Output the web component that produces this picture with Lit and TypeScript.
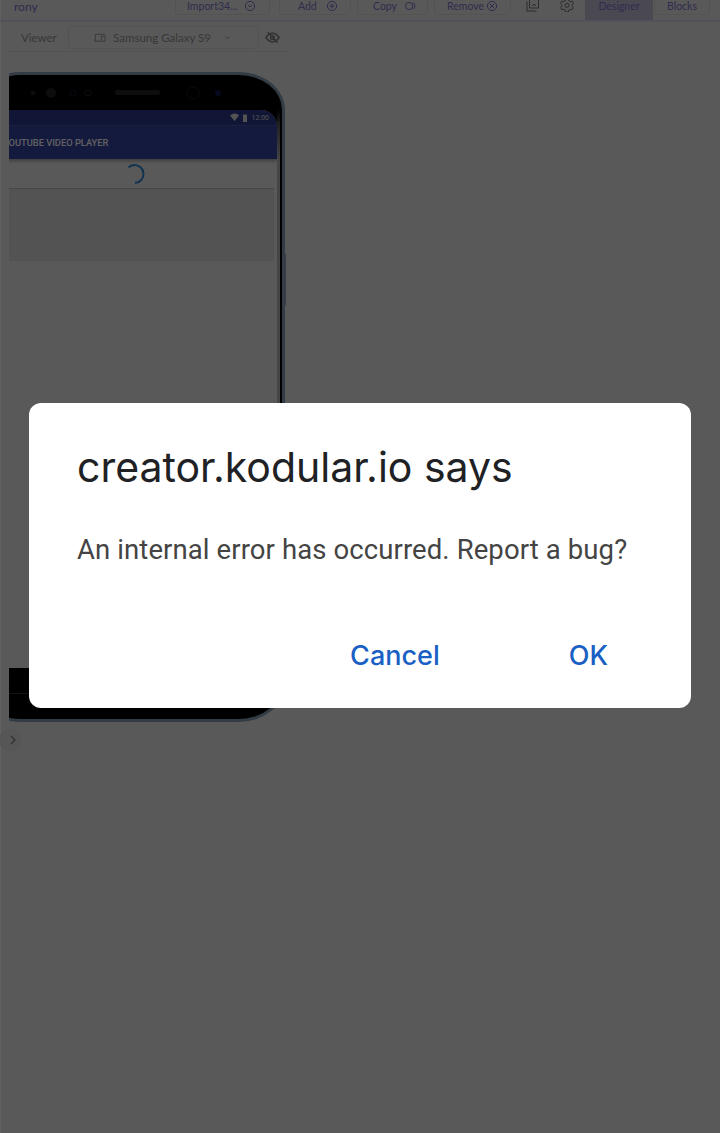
import { LitElement, html, css, svg } from "lit";
import { customElement } from "lit/decorators.js";

const circleIcon = (inner: unknown) => html`<svg class="ico" viewBox="0 0 12 12" fill="none" stroke="currentColor" stroke-width="1"><circle cx="6" cy="6" r="4.6"></circle>${inner}</svg>`;

@customElement("app-root")
export class AppRoot extends LitElement {
  static styles = css`
    :host { display: block; position: relative; width: 720px; height: 1133px; overflow: hidden; background: #dedede; font-family: "Lato", "Liberation Sans", sans-serif; }
    .page { height: 100%; display: flex; flex-direction: column; border-left: 1px solid #f2f2f2; box-sizing: border-box; }
    .topbar { height: 20px; flex: none; display: flex; align-items: flex-end; overflow: hidden; border-bottom: 2px solid #cfcbe0; color: #7a6fc0; font-size: 10.5px; padding-left: 14px; margin-left: -1px; }
    .user { width: 160px; font-size: 12px; padding-bottom: 7px; line-height: 13px; flex: none; }
    .btn { height: 30px; box-sizing: border-box; border: 1px solid #d0d0d0; border-radius: 4px; margin-bottom: 5px; display: flex; align-items: flex-end; padding-bottom: 2px; line-height: 12px; flex: none; }
    .ico { width: 12px; height: 12px; flex: none; }
    .import { width: 95px; margin-left: 1px; padding-left: 11px; gap: 6px; }
    .add { width: 72px; margin-left: 9px; padding-left: 18px; gap: 9px; }
    .copy { width: 71px; margin-left: 6px; padding-left: 15px; gap: 7px; }
    .remove { width: 77px; margin-left: 6px; padding-left: 12px; gap: 2px; }
    .plain { display: flex; width: 34px; justify-content: center; margin-bottom: 8px; color: #6c6c6c; flex: none; }
    .plain svg { width: 14px; height: 14px; }
    .first { margin-left: 5px; }
    .tab { height: 20px; display: flex; align-items: flex-end; justify-content: center; padding-bottom: 8px; box-sizing: border-box; line-height: 11px; flex: none; }
    .designer { width: 68px; background: #b9b6ce; margin-left: 1px; }
    .blocks { width: 56px; height: 30px; border: 1px solid #d0d0d0; border-radius: 4px; margin: 0 0 5px 1px; padding-bottom: 2px; }
    .panel { width: 279px; margin-left: 8px; flex: 1; min-height: 0; display: flex; flex-direction: column; }
    .viewer { flex: none; height: 28px; margin-top: 1px; border-bottom: 1px solid #d0d0d0; display: flex; align-items: center; color: #8c8c8c; font-size: 11.5px; }
    .vlabel { width: 59px; padding-left: 12px; box-sizing: border-box; }
    .select { width: 191px; height: 23px; box-sizing: border-box; border: 1px solid #d0d0d0; border-radius: 4px; display: flex; align-items: center; justify-content: center; gap: 7px; }
    .select svg { width: 13px; height: 13px; }
    .chev { margin-left: 3px; }
    .eye { width: 15px; height: 15px; margin-left: 6px; color: #7c7c7c; }
    .stage { position: relative; flex: none; height: 670px; padding-top: 20px; box-sizing: border-box; overflow: hidden; width: 300px; }
    .phone { width: 310px; height: 650px; margin-left: -34px; box-sizing: border-box; background: #000; border: 3px solid #7f93ad; border-left: 0; border-radius: 46px / 38px; position: relative; overflow: hidden; display: flex; flex-direction: column; }
    .bezel { height: 33px; flex: none; }
    .screen { flex: none; height: 558px; margin: 2px 5px 0 0; background: #dedede; border-radius: 0 16px 0 0; overflow: hidden; display: flex; flex-direction: column; }
    .edge { position: absolute; right: 2px; top: 26px; width: 3px; height: 566px; background: linear-gradient(#000 8px, #555 24px, #aeaeae 60px); }
    .status { height: 16px; flex: none; background: #2c3788; display: flex; justify-content: flex-end; align-items: center; gap: 2px; color: #cfcfcf; font: 7px "Roboto", sans-serif; padding-right: 8px; border-bottom: 1px solid #46529f; box-sizing: border-box; }
    .status svg { width: 20px; height: 10px; }
    .appbar { height: 33px; flex: none; background: #343f9c; color: #f0f0f0; font: 500 9.3px/33px "Roboto", sans-serif; padding-left: 28px; box-shadow: 0 2px 3px rgba(0,0,0,.3); white-space: nowrap; position: relative; }
    .spin { height: 30px; box-sizing: border-box; flex: none; display: flex; justify-content: center; align-items: center; padding-left: 19px; border-bottom: 1px solid #aeaeae; margin-right: 3px; }
    .spin svg { width: 22px; height: 22px; }
    .video { height: 72px; flex: none; background: #d0d0d0; margin-right: 3px; }
    .navline { position: absolute; left: 0; right: 0; top: 618px; height: 1px; background: #333; }
    .side { position: absolute; left: 274px; top: 201px; width: 3px; height: 53px; background: #8794b0; border-radius: 0 2px 2px 0; }
    .collapse { flex: none; width: 22px; height: 22px; margin: 7px 0 0 -10px; border-radius: 50%; background: #d6d6d6; display: flex; align-items: center; justify-content: flex-end; color: #777; }
    .collapse svg { width: 10px; height: 10px; margin-right: 3px; }
    .scrim { position: absolute; inset: 0; background: rgba(0,0,0,.6); }
    .dialog { position: absolute; left: 29px; top: 403px; width: 662px; height: 305px; box-sizing: border-box; padding: 40px 48px 0; background: #fff; border-radius: 12px; display: flex; flex-direction: column; }
    h1 { margin: 0; font: 400 41px/48px "Inter", sans-serif; color: #202124; white-space: nowrap; }
    p { margin: 41px 0 0; font: 400 27.5px/36px "Roboto", sans-serif; color: #444; white-space: nowrap; letter-spacing: .1px; }
    .actions { display: flex; margin-top: 70px; color: #1a5fc4; font: 500 27px/36px "Inter", sans-serif; justify-content: flex-end; padding-right: 35px; gap: 129px; }
  `;

  render() {
    return html`
      <div class="page">
        <div class="topbar">
          <span class="user">rony</span>
          <span class="btn import">Import34...${circleIcon(svg`<path d="M4 5l2 2 2-2"></path>`)}</span>
          <span class="btn add">Add${circleIcon(svg`<path d="M6 3.500v5M3.500 6h5"></path>`)}</span>
          <span class="btn copy">Copy<svg class="ico" viewBox="0 0 12 12" fill="none" stroke="currentColor"><circle cx="5" cy="6" r="3.600"></circle><path d="M8.500 2.600a3.600 3.600 0 0 1 0 6.800"></path></svg></span>
          <span class="btn remove">Remove${circleIcon(svg`<path d="M4 4l4 4M8 4l-4 4"></path>`)}</span>
          <span class="plain first"><svg viewBox="0 0 14 14" fill="none" stroke="currentColor"><path d="M3.500 1h9v9h-9zM1 3.500V13h9.500M6 8l2-2 2 2"></path></svg></span>
          <span class="plain"><svg viewBox="0 0 14 14" fill="none" stroke="currentColor"><path d="M5.600 1h2.800l.4 1.800 1.500.8 1.700-.6 1.400 2.400-1.300 1.200v1.700l1.300 1.200-1.400 2.400-1.700-.6-1.500.8-.4 1.800H5.600l-.4-1.800-1.500-.8-1.700.6L.6 9.500l1.300-1.200V6.600L.6 5.400 2 3l1.700.6 1.500-.8z"></path><circle cx="7" cy="7.400" r="2"></circle></svg></span>
          <span class="tab designer">Designer</span>
          <span class="tab blocks">Blocks</span>
        </div>
        <div class="panel">
          <div class="viewer">
            <span class="vlabel">Viewer</span>
            <div class="select">
              <svg viewBox="0 0 14 14" fill="none" stroke="currentColor"><path d="M1 11h8M2.500 11V3.500h10M9 5.500h4v5.500H9z"></path></svg>
              <span>Samsung Galaxy S9</span>
              <svg class="chev" viewBox="0 0 14 14" fill="none" stroke="currentColor"><path d="M4.500 6l2.500 2.500L9.500 6"></path></svg>
            </div>
            <svg class="eye" viewBox="0 0 16 16" fill="none" stroke="currentColor" stroke-width="1.500"><path d="M1 8c2-3 4.500-4.500 7-4.500S13 5 15 8c-2 3-4.500 4.500-7 4.500S3 11 1 8z"></path><circle cx="8" cy="8" r="2"></circle><path d="M3 2.500l10.500 11"></path></svg>
          </div>
          <div class="stage">
            <div class="phone">
              <div class="bezel">
                <svg width="300" height="33" viewBox="0 0 300 33">
                  <circle cx="58" cy="18" r="2.500" fill="#1c1c1c"></circle>
                  <circle cx="76" cy="18" r="5" fill="#222"></circle>
                  <circle cx="98" cy="18" r="3" fill="none" stroke="#141a30"></circle>
                  <circle cx="113" cy="18" r="3" fill="none" stroke="#222"></circle>
                  <rect x="140" y="15" width="45" height="5" rx="2.500" fill="#222"></rect>
                  <circle cx="218" cy="18" r="6" fill="none" stroke="#1c1c1c"></circle>
                  <circle cx="243" cy="18" r="3" fill="#101a4a"></circle>
                </svg>
              </div>
              <div class="screen">
                <div class="status">
                  <svg viewBox="0 0 20 10" fill="currentColor"><path d="M0 2.500C3-.3 7-.3 9 2.500L4.500 8zM13 1.500h4v7.500h-4z"></path></svg>
                  <span>12:00</span>
                </div>
                <div class="appbar">YOUTUBE VIDEO PLAYER</div>
                <div class="spin"><svg viewBox="0 0 22 22" fill="none" stroke="#2f7fc4" stroke-width="2"><path d="M5.500 4.500A9.500 9.500 0 0 1 11 2a9 9 0 0 1 1 18"></path></svg></div>
                <div class="video"></div>
              </div>
              <div class="edge"></div>
              <div class="navline"></div>
            </div>
            <div class="side"></div>
          </div>
          <div class="collapse"><svg viewBox="0 0 10 10" fill="none" stroke="currentColor" stroke-width="1.200"><path d="M3 1l4 4-4 4"></path></svg></div>
        </div>
      </div>
      <div class="scrim"></div>
      <div class="dialog">
        <h1>creator.kodular.io says</h1>
        <p>An internal error has occurred. Report a bug?</p>
        <div class="actions"><span>Cancel</span><span>OK</span></div>
      </div>
    `;
  }
}
